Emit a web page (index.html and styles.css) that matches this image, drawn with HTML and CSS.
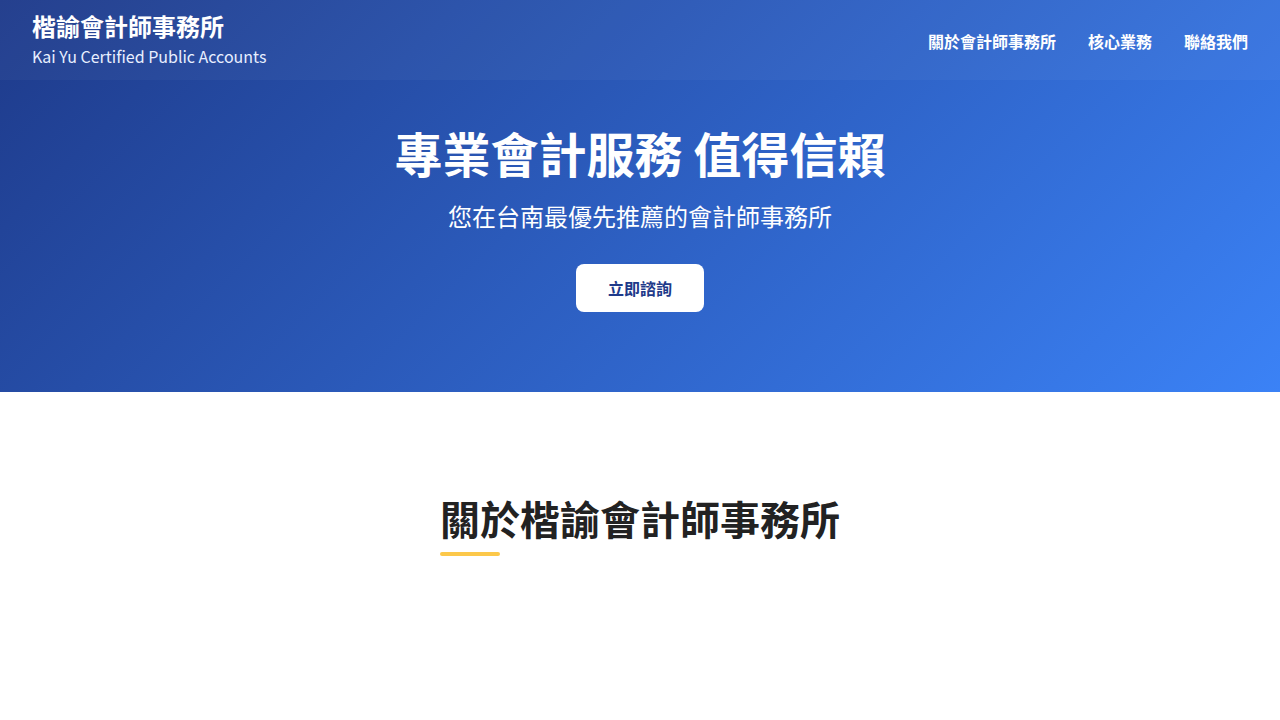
FILE: index.html
```html
<!DOCTYPE html>
<html lang="zh-Hant">
<head>
<meta charset="utf-8">
<title>楷諭會計師事務所</title>
<link rel="stylesheet" href="styles.css">
</head>
<body>
<div class="hero-wrap">
  <header class="site-header">
    <div class="brand">
      <div class="brand-name">楷諭會計師事務所</div>
      <div class="brand-sub">Kai Yu Certified Public Accounts</div>
    </div>
    <nav class="nav">
      <a href="#about">關於會計師事務所</a>
      <a href="#services">核心業務</a>
      <a href="#contact">聯絡我們</a>
    </nav>
  </header>
  <section class="hero">
    <h1 class="hero-title">專業會計服務 值得信賴</h1>
    <p class="hero-sub">您在台南最優先推薦的會計師事務所</p>
    <a class="hero-btn" href="#contact">立即諮詢</a>
  </section>
</div>
<section class="about" id="about">
  <div class="section-head">
    <h2 class="section-title">關於楷諭會計師事務所</h2>
    <span class="section-bar"></span>
  </div>
</section>
</body>
</html>
```
FILE: styles.css
```css
* { box-sizing: border-box; }
html, body { margin: 0; padding: 0; }
body {
  font-family: "Noto Sans CJK TC", "Noto Sans", sans-serif;
  background: #ffffff;
  color: #222;
}
a { text-decoration: none; }
.hero-wrap {
  position: relative;
  background: linear-gradient(135deg, #1e3a8a 0%, #3b82f6 100%);
}
.site-header {
  position: absolute;
  top: 0; left: 0; right: 0;
  height: 80px;
  padding: 0 32px;
  display: flex;
  align-items: center;
  justify-content: space-between;
  background: rgba(255,255,255,0.035);
  color: #fff;
}
.brand { display: flex; flex-direction: column; padding-top: 0; }
.brand-name { font-size: 24px; font-weight: 700; line-height: 30px; }
.brand-sub { font-size: 16px; line-height: 28px; padding-top: 1px; color: #e8efff; }
.nav { display: flex; gap: 32px; padding-top: 2px; }
.nav a { color: #fff; font-size: 16px; font-weight: 700; line-height: 24px; }
.hero {
  height: 392px;
  padding-top: 123px;
  display: flex;
  flex-direction: column;
  align-items: center;
  color: #fff;
}
.hero-title { margin: 0; font-size: 48px; font-weight: 700; line-height: 58px; }
.hero-sub { margin: 17px 0 0; font-size: 24px; font-weight: 400; line-height: 36px; }
.hero-btn {
  margin-top: 30px;
  width: 128px;
  height: 48px;
  display: flex;
  align-items: center;
  justify-content: center;
  background: #fff;
  color: #1e3a8a;
  border-radius: 8px;
  font-size: 16px;
  font-weight: 700;
}
.about {
  padding-top: 98px;
  display: flex;
  justify-content: center;
  min-height: 328px;
}
.section-head { display: flex; flex-direction: column; align-items: flex-start; }
.section-title { margin: 0; font-size: 40px; font-weight: 700; line-height: 56px; color: #222; }
.section-bar { display: block; margin-top: 6px; width: 60px; height: 4px; background: #fcc84a; border-radius: 2px; }
```
